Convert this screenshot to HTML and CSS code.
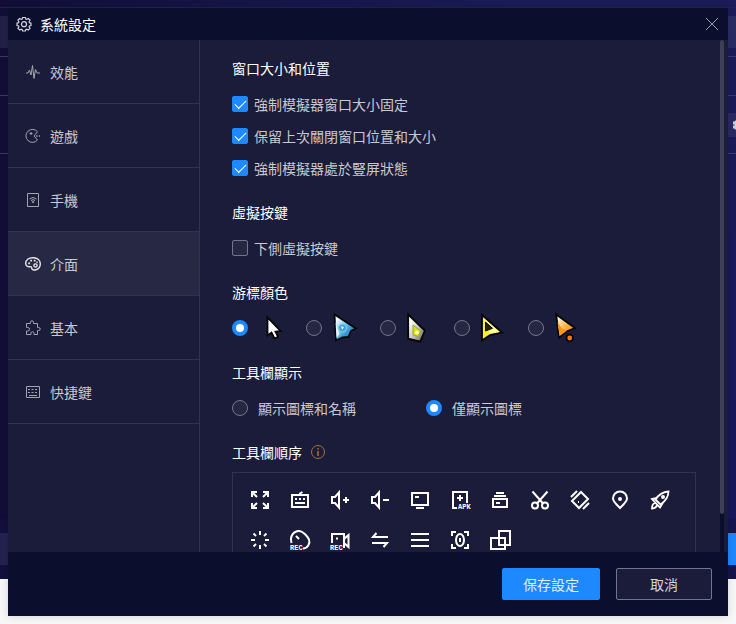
FILE: index.html
```html
<!DOCTYPE html>
<html lang="zh-Hant">
<head>
<meta charset="utf-8">
<title>系統設定</title>
<link rel="stylesheet" href="styles.css">
</head>
<body>
<div class="backdrop" aria-hidden="true">
  <div class="bd-top"></div>
  <div class="bd-tabs"></div>
  <div class="bd-row"></div>
  <div class="bd-search"><span class="bd-chip"><svg width="8" height="10" viewBox="0 0 8 10"><path d="M0 2h2v2H0zM0 6h2v2H0zM2 1h5v8H2z"/></svg></span></div>
  <div class="bd-space"></div>
  <div class="bd-bottom"><span class="bd-field"></span><span class="bd-action"></span></div>
</div>

<div class="dialog" role="dialog" aria-labelledby="dialog-title">
  <header class="titlebar">
    <svg class="gear" width="16" height="16" viewBox="0 0 16 16"><path d="M6.6 1.500h2.800l.4 1.500 1 .4 1.500-.9 1.700 1.700-.9 1.500.4 1 1.500.4v2.400l-1.500.4-.4 1 .9 1.500-1.700 1.700-1.500-.9-1 .4-.4 1.400H6.600l-.4-1.400-1-.4-1.500.9L2 12.400l.9-1.500-.4-1L1 9.500V7.100l1.500-.4.4-1L2 4.200l1.700-1.700 1.500.9 1-.4z"/><circle cx="8" cy="8.200" r="2.500"/></svg>
    <h1 id="dialog-title">系統設定</h1>
    <button class="close" type="button" aria-label="關閉"><svg width="14" height="14" viewBox="0 0 14 14"><path d="M1 1l12 12M13 1L1 13"/></svg></button>
  </header>

  <div class="body">
    <nav class="sidebar">
      <a href="#"><svg width="18" height="16" viewBox="0 0 18 16"><path d="M2 9h2l1.500-3 1.500 5L8.500 1.500 10 14.500l1.500-9L13 9h3"/></svg>效能</a>
      <a href="#"><svg width="18" height="16" viewBox="0 0 18 16"><path d="M13.500 3.800A6.500 6.500 0 1 0 13.500 12L10 8zM7 4v3M5.500 5.500h3"/><path d="M12.200 7.300h1.500v1.500h-1.500zM15 7.300h1v1.500h-1z" class="fill"/></svg>遊戲</a>
      <a href="#"><svg width="18" height="16" viewBox="0 0 18 16"><path d="M3.500 1.500h11v13h-11zM5.500 7Q9 4 12.500 7M7 8.500q2-1.800 4 0"/><circle cx="9" cy="10" r=".8"/></svg>手機</a>
      <a href="#" class="active" aria-current="page"><svg width="18" height="16" viewBox="0 0 18 16"><path d="M9.500 1.800C4.500 1.500 1.700 4 1.700 7.300c0 2.500 1.800 3.700 4.300 3.400 1.500-.2 1.700.5 1.700 1.500 0 3 8.600 2.500 8.600-4.400 0-3.400-2.800-5.800-6.800-6z"/><circle cx="11.500" cy="9.500" r="1.600"/><path d="M4.200 6.500h1.800v1.800H4.200zM6.200 3.800H8v1.800H6.200zM9.800 3.800h1.800v1.800H9.800zM12.400 5.500h1.300v1.500h-1.300z" class="fill"/></svg>介面</a>
      <a href="#"><svg width="18" height="16" viewBox="0 0 18 16"><path d="M2.500 3.500h4V2.300a1.500 1.500 0 0 1 3 0v1.200h4v4h1.200a1.400 1.400 0 0 1 0 3h-1.200v4h-3.500v-1.300a1.500 1.500 0 0 0-3 0v1.300H2.500V11h1.300a1.400 1.400 0 0 0 0-3.500H2.500z"/></svg>基本</a>
      <a href="#"><svg width="18" height="16" viewBox="0 0 18 16"><path d="M2.500 2.500h13v11h-13zM4 5.500h2m1.500 0h2m1.500 0h2M4 8.500h2m1.500 0h2m1.500 0h2M5 11.500h8"/></svg>快捷鍵</a>
    </nav>

    <main class="content">
      <section>
        <h2>窗口大小和位置</h2>
        <label class="row"><input type="checkbox" checked>強制模擬器窗口大小固定</label>
        <label class="row"><input type="checkbox" checked>保留上次關閉窗口位置和大小</label>
        <label class="row"><input type="checkbox" checked>強制模擬器處於豎屏狀態</label>
      </section>

      <section>
        <h2>虛擬按鍵</h2>
        <label class="row"><input type="checkbox">下側虛擬按鍵</label>
      </section>

      <section>
        <h2>游標顏色</h2>
        <div class="cursors">
          <label class="row"><input type="radio" name="cursor" aria-label="白色" checked>
            <svg width="32" height="32" viewBox="0 0 32 32"><path d="M9.500 5.500v18l4-3 3 6 3.500-1.800-2.500-5 5-.7z" fill="#fff" stroke="#050505" stroke-width="1.800"/></svg></label>
          <label class="row"><input type="radio" name="cursor" aria-label="藍色">
            <svg width="32" height="32" viewBox="0 0 32 32"><defs><linearGradient id="blue" x1="0" y1="0" x2="1" y2="1"><stop offset=".15" stop-color="#fff"/><stop offset=".5" stop-color="#5cb8e8"/><stop offset=".8" stop-color="#0878b8"/></linearGradient></defs><path d="M2.500 2.500L24 16.500l-5 2.500-2.500 6-6 .5L4 28.500z" fill="url(#blue)" stroke="#050505" stroke-width="1.800"/><path d="M3.500 10l4 12-3 4z" fill="#e8f4fa"/><circle cx="10.500" cy="16" r="4" fill="#3c9fd8" stroke="#8fd0f0"/><path d="M9 14l3 1-2 3z" fill="#dff6ff"/></svg></label>
          <label class="row"><input type="radio" name="cursor" aria-label="綠色">
            <svg width="32" height="32" viewBox="0 0 32 32"><defs><linearGradient id="silver" x1="0" y1="0" x2="1" y2="1"><stop offset=".2" stop-color="#fff"/><stop offset=".6" stop-color="#b8b8b4"/><stop offset="1" stop-color="#55554e"/></linearGradient></defs><path d="M2.200 2.500L18.800 18.500l-4.500 11.200-12.100-3z" fill="url(#silver)" stroke="#050505" stroke-width="1.800"/><path d="M7 13l7.500 6-2 5.500L7 23z" fill="#d8e014" stroke="#a0a434"/><circle cx="11" cy="20.500" r="2" fill="#ffff9c"/></svg></label>
          <label class="row"><input type="radio" name="cursor" aria-label="黃色">
            <svg width="32" height="32" viewBox="0 0 32 32"><path d="M2 3l20 17.500-12 2.500L2 28.500z" fill="#ffef25" stroke="#050505" stroke-width="1.800"/><path d="M3.500 6l16 14-10 1.500z" fill="#ffffa0"/><path d="M5.500 10l7 6.300-7 2.700z" fill="#26240a" stroke="#050505"/></svg></label>
          <label class="row"><input type="radio" name="cursor" aria-label="橘色">
            <svg width="32" height="32" viewBox="0 0 32 32"><defs><linearGradient id="orange" x1="0" y1="0" x2="1" y2="1"><stop offset=".15" stop-color="#fff4dc"/><stop offset=".5" stop-color="#ffb347"/><stop offset="1" stop-color="#f07800"/></linearGradient></defs><path d="M2.200 2.500L21 16l-8.500 3.500-7.500 6z" fill="url(#orange)" stroke="#050505" stroke-width="1.800"/><path d="M3.500 10l4 6 5 3-7 5z" fill="#ff9618"/><circle cx="15.700" cy="26" r="3.200" fill="#ff7800" stroke="#050505" stroke-width="1.600"/></svg></label>
        </div>
      </section>

      <section>
        <h2>工具欄顯示</h2>
        <div class="display">
          <label class="row"><input type="radio" name="display">顯示圖標和名稱</label>
          <label class="row"><input type="radio" name="display" checked>僅顯示圖標</label>
        </div>
      </section>

      <section>
        <h2>工具欄順序<svg class="info" width="16" height="16" viewBox="0 0 16 16"><circle cx="8" cy="8" r="6.500"/><path d="M8 7v5M8 4v1.500" stroke-width="1.500"/></svg></h2>
        <div class="tools">
          <svg viewBox="0 0 20 20"><path d="M2 7V2h5M13 2h5v5M18 13v5h-5M7 18H2v-5M2 2l5 5M18 2l-5 5M18 18l-5-5M2 18l5-5"/></svg>
          <svg viewBox="0 0 20 20"><path d="M2 5h16v12H2zM10 5V3.500L12.500 2M5 9h2m2 0h2m2 0h2M5 13h10"/></svg>
          <svg viewBox="0 0 20 20"><path d="M2 7h3l4-4.500v15L5 13H2zM13 10h6M16 7v6"/></svg>
          <svg viewBox="0 0 20 20"><path d="M2 7h3l4-4.500v15L5 13H2zM13 10h6"/></svg>
          <svg viewBox="0 0 20 20"><path d="M2 3h16v12H2zM6 18h8M5 7h4"/></svg>
          <svg viewBox="0 0 20 20"><path d="M7 18H3V2h14v11M7 8h6M10 5v6"/><text x="8" y="19">APK</text></svg>
          <svg viewBox="0 0 20 20"><path d="M6 3h8M4 6h12M3 9h14v8H3zM6 13h4"/></svg>
          <svg viewBox="0 0 20 20"><path d="M2.500 1.500L13.500 14M17.500 1.500L6.500 14"/><circle cx="5" cy="15.500" r="3"/><circle cx="15" cy="15.500" r="3"/></svg>
          <svg viewBox="0 0 20 20"><path d="M11 2l7 7-9 9-7-7zM1 7l6-6M13 19l6-6"/><path d="M8 11h1v2H8z" class="fill"/></svg>
          <svg viewBox="0 0 20 20"><path d="M10 18C6 14 3 11.500 3 8.500a7 7 0 0 1 14 0C17 11.500 14 14 10 18z"/><circle cx="10" cy="9" r="2" class="fill"/></svg>
          <svg viewBox="0 0 20 20"><path d="M5.500 9.500C9 4 13 2 18.500 1.500c0 5.500-3 9.500-8 13zM6.500 8L2 9l8 8.500 3-5M5 13c-2 .5-3 3-3 5.500 2 0 4-1 5-3" stroke-width="1.800"/><circle cx="13" cy="7" r="2" class="fill"/></svg>
          <svg viewBox="0 0 20 20"><path d="M10 1v4M10 15v4M1 10h4M15 10h4M3.500 3.500L6 6M14 14l2.500 2.500M16.500 3.500L14 6M6 14l-2.500 2.500"/></svg>
          <svg viewBox="0 0 20 20"><path d="M1.500 13C-.5 6 4 .5 9.500 1c3 .3 8 5 9.500 8.500 1.500 4-1.500 9-6 9M6 6l3 3"/><text x="0" y="20">REC</text></svg>
          <svg viewBox="0 0 20 20"><path d="M2 13V4h12v14M14 9l4.500-4v12L14 13M6 8.500h2"/><text x="0" y="20">REC</text></svg>
          <svg viewBox="0 0 20 20"><path d="M6.500 3L3 7h15M2 13h15l-3.500 4"/></svg>
          <svg viewBox="0 0 20 20"><path d="M1 4h18M1 10h18M1 16h18"/></svg>
          <svg viewBox="0 0 20 20"><path d="M2 6V2h4M14 2h4v4M18 14v4h-4M6 18H2v-4"/><ellipse cx="10" cy="10" rx="4" ry="6"/><path d="M10 8v4"/></svg>
          <svg viewBox="0 0 20 20"><path d="M9 1h11v14H9zM1 8h14v11H1z"/></svg>
        </div>
      </section>
    </main>
    <div class="scrollbar"><div class="thumb"></div></div>
  </div>

  <footer class="actions">
    <button class="save" type="button">保存設定</button>
    <button class="cancel" type="button">取消</button>
  </footer>
</div>
</body>
</html>
```
FILE: styles.css
```css
* { box-sizing: border-box; }

body {
  margin: 0;
  min-height: 100vh;
  display: grid;
  grid-template-columns: minmax(0, 1fr);
  background: #f7f7f7;
  color: #c9cad0;
  font: 14px/24px "Noto Sans CJK TC", sans-serif;
  overflow: hidden;
}

/* Main window behind the dialog */
.backdrop {
  grid-area: 1 / 1;
  margin-bottom: 45px;
  display: flex;
  flex-direction: column;
  background: linear-gradient(90deg, rgba(14, 11, 48, .8), transparent 70%), linear-gradient(#1b1c58, #19165a);
}
.backdrop > div { border-bottom: 1px solid #3a3a66; }
.backdrop > .bd-top { height: 8px; border-color: #23224a; }
.bd-tabs {
  height: 49px;
  background: linear-gradient(#ffffff12, #ffffff12) 0 8px / 100% 32px no-repeat;
}
.bd-row { height: 39px; }
.bd-search { height: 58px; display: flex; justify-content: flex-end; align-items: center; }
.bd-chip { width: 8px; height: 24px; background: #2a2a62; display: flex; align-items: center; justify-content: flex-end; overflow: hidden; }
.bd-chip svg { flex: none; margin-right: -5px; fill: #e4e4ec; }
.backdrop > .bd-space { flex: 1; border: 0; }
.backdrop > .bd-bottom {
  height: 60px;
  border: 0;
  display: flex;
  justify-content: space-between;
  align-items: center;
  background: #14134088;
}
.bd-field { width: 8px; height: 32px; background: #242250; }
.bd-action { width: 8px; height: 32px; background: #1e88ff; }

.dialog {
  grid-area: 1 / 1;
  margin: 8px;
  height: calc(100vh - 16px);
  display: flex;
  flex-direction: column;
  background: #0c0e2e;
  box-shadow: 0 0 8px #00000026;
  z-index: 1;
}

svg { flex: none; fill: none; stroke: currentColor; }
svg .fill { fill: currentColor; stroke: none; }

.titlebar {
  height: 32px;
  padding: 0 8px;
  display: flex;
  align-items: center;
  gap: 8px;
  color: #fff;
}
.gear { color: #d5d6df; stroke-width: 1.2; }
h1, h2 { margin: 0; font-size: 14px; font-weight: 400; line-height: 24px; color: #fff; }
h1 { flex: 1; }
.close { padding: 0 1px; height: 14px; border: 0; background: none; color: #9a9bab; display: flex; }

.body { flex: 1; min-height: 0; display: flex; background: #1a1c3a; }

.sidebar { width: 192px; border-right: 1px solid #33334f; }
.sidebar a {
  height: 64px;
  padding: 0 16px;
  display: flex;
  align-items: center;
  gap: 8px;
  border-bottom: 1px solid #33334f;
  color: #c9cad0;
  text-decoration: none;
}
.sidebar svg { color: #a3a4b0; }
.sidebar .active { background: #262844; }
.sidebar .active svg { color: #e6e6ec; stroke-width: 1.4; }

.content { flex: 1; min-width: 0; padding: 16px 24px 0 32px; overflow: hidden; }
section { margin-bottom: 16px; }
h2 { margin-bottom: 8px; display: flex; align-items: center; gap: 8px; }
.info { color: #a0733a; }

.row { height: 32px; display: flex; align-items: center; gap: 6px; }
input {
  appearance: none;
  flex: none;
  width: 16px;
  height: 16px;
  margin: 0;
  border: 1px solid #74758a;
  border-radius: 2px;
  background: #262743;
}
input:checked { border-color: #1e88ff; background: #1e88ff; }
input[type="checkbox"]:checked::before {
  content: "";
  display: block;
  width: 10px;
  height: 5px;
  margin: 3px 2px;
  border: solid #fff;
  border-width: 0 0 1px 1px;
  transform: rotate(-45deg);
}
input[type="radio"] { border-radius: 50%; }
input[type="radio"]:checked { border: 4px solid #1e88ff; background: #fff; }

.cursors { display: flex; gap: 16px; }
.cursors svg { stroke: none; }
.cursors .row, .display .row { gap: 10px; }
.display { display: grid; grid-template-columns: 194px 1fr; }

.tools {
  min-height: 96px;
  padding: 7px;
  display: grid;
  grid-template-columns: repeat(auto-fill, 40px);
  grid-auto-rows: 40px;
  place-items: center;
  border: 1px solid #33334f;
  color: #fff;
}
.tools svg { width: 20px; height: 20px; stroke-width: 2; overflow: visible; }
.tools text { font: bold 7px "Liberation Mono", monospace; fill: #fff; stroke: none; }

.scrollbar { width: 4px; margin-right: 4px; background: #0c0e2e; }
.thumb { height: 92.6%; border-radius: 2px; background: #3d3f58; }

.actions { height: 64px; padding: 0 16px; display: flex; justify-content: flex-end; align-items: center; gap: 16px; }
.actions button { width: 96px; height: 32px; padding: 0; border: 1px solid #74758a; border-radius: 2px; font: inherit; color: #d4d5dc; background: #1a1c3a; }
.actions .save { width: 98px; border-color: #1e88ff; background: #1e88ff; color: #e2efff; }
```
